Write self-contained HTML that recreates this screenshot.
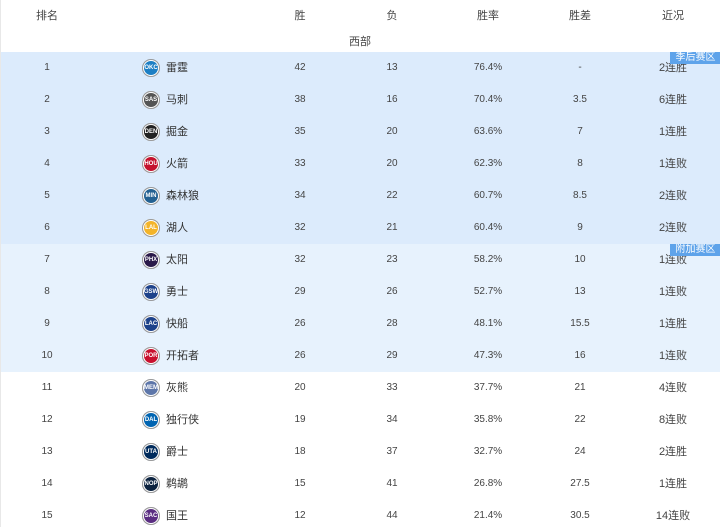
<!DOCTYPE html>
<html><head><meta charset="utf-8"><style>
body{margin:0;width:720px;height:527px;overflow:hidden;background:#fff;font-family:"Liberation Sans","Noto Sans CJK SC",sans-serif;color:#333;position:relative}
.h{position:absolute;top:0;height:32px;line-height:32px;font-size:11px;color:#444}
.c{position:absolute;transform:translateX(-50%);white-space:nowrap}
.row{position:absolute;left:1px;width:719px;height:32px;line-height:32px;font-size:10px;color:#444}
.lg{position:absolute;left:141px;top:7px;width:18px;height:18px;border-radius:50%;font-size:6px;line-height:18px;text-align:center;color:#fff;font-weight:bold;box-shadow:0 0 0 1px #999 inset,0 0 0 2px #fff inset}
.nm{position:absolute;left:165px;font-size:11px;color:#333}
.tag{position:absolute;left:669px;top:0;width:51px;height:12px;line-height:12px;background:#5ea3ea;color:#fff;font-size:10px;text-align:center;overflow:hidden}
</style></head><body>
<div style="position:absolute;left:0;top:0;width:1px;height:527px;background:#e8e8e8"></div>
<div class="h c" style="left:47px">排名</div>
<div class="h c" style="left:300px">胜</div>
<div class="h c" style="left:392px">负</div>
<div class="h c" style="left:488px">胜率</div>
<div class="h c" style="left:580px">胜差</div>
<div class="h c" style="left:673px">近况</div>
<div class="c" style="top:32px;left:360px;height:20px;line-height:20px;font-size:11px;color:#444">西部</div>
<div id="t"></div>
<script>
var d=[["雷霆",42,13,"76.4%","-","2连胜","#1d7fc4","OKC"],["马刺",38,16,"70.4%","3.5","6连胜","#555","SAS"],["掘金",35,20,"63.6%","7","1连胜","#222","DEN"],["火箭",33,20,"62.3%","8","1连败","#c4122e","HOU"],["森林狼",34,22,"60.7%","8.5","2连败","#236192","MIN"],["湖人",32,21,"60.4%","9","2连败","#f3b42a","LAL"],["太阳",32,23,"58.2%","10","1连败","#2a1a4a","PHX"],["勇士",29,26,"52.7%","13","1连败","#1d428a","GSW"],["快船",26,28,"48.1%","15.5","1连胜","#1d428a","LAC"],["开拓者",26,29,"47.3%","16","1连败","#c8102e","POR"],["灰熊",20,33,"37.7%","21","4连败","#5d76a9","MEM"],["独行侠",19,34,"35.8%","22","8连败","#0064b1","DAL"],["爵士",18,37,"32.7%","24","2连胜","#002b5c","UTA"],["鹈鹕",15,41,"26.8%","27.5","1连胜","#0c2340","NOP"],["国王",12,44,"21.4%","30.5","14连败","#5a2d81","SAC"]];
var h="";
d.forEach(function(r,i){var bg=i<6?"#dcebfc":i<10?"#e7f2fd":"#fff";
h+='<div class="row" style="top:'+(52+i*32)+'px;background:'+bg+'">'+
'<span class="c" style="left:46px">'+(i+1)+'</span>'+
'<div class="lg" style="background:'+r[6]+'">'+r[7]+'</div>'+
'<span class="nm">'+r[0]+'</span>'+
'<span class="c" style="left:299px">'+r[1]+'</span>'+
'<span class="c" style="left:391px">'+r[2]+'</span>'+
'<span class="c" style="left:487px">'+r[3]+'</span>'+
'<span class="c" style="left:579px">'+r[4]+'</span>'+
'<span class="c" style="left:672px;font-size:11px">'+r[5]+'</span>'+
(i==0?'<div class="tag">季后赛区</div>':'')+(i==6?'<div class="tag">附加赛区</div>':'')+
'</div>';});
document.getElementById("t").innerHTML=h;
</script>
</body></html>
